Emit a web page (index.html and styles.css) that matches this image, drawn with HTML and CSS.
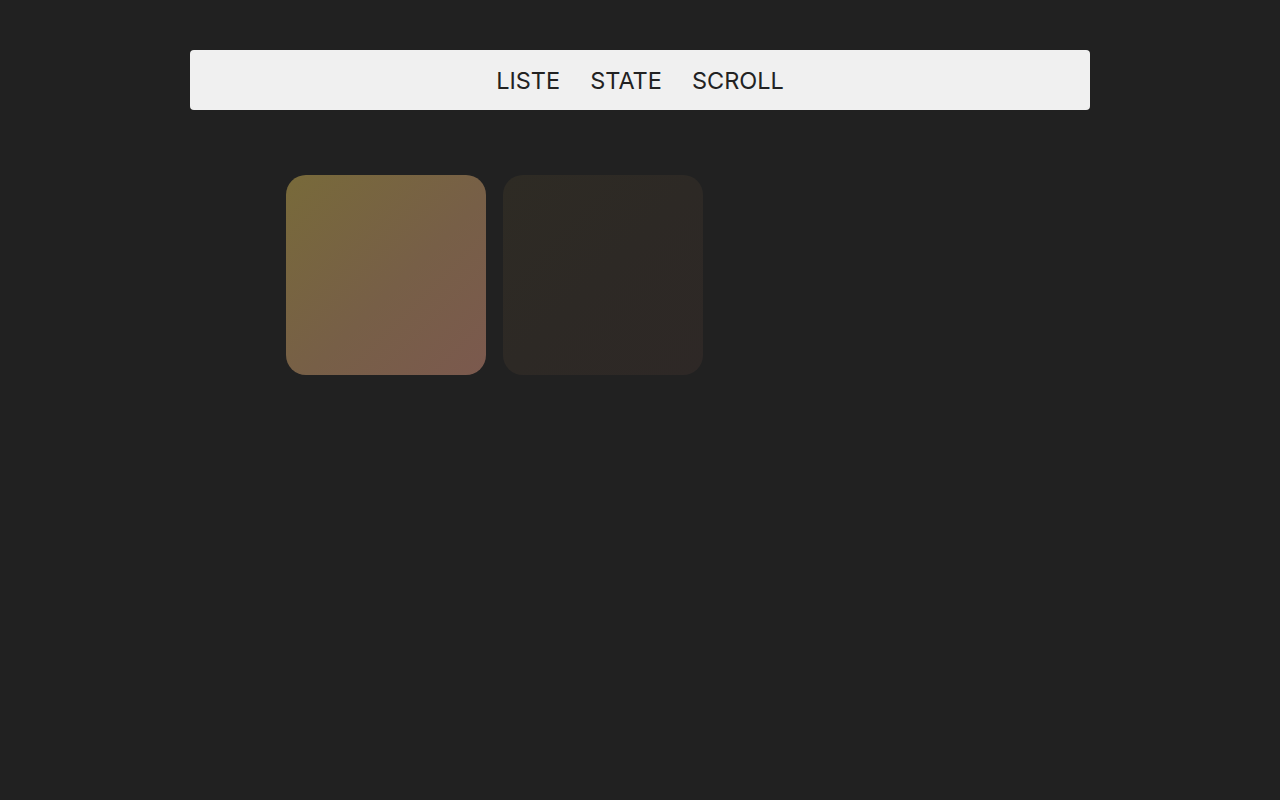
FILE: index.html
```html
<!DOCTYPE html>
<html lang="de">
<head>
<meta charset="utf-8">
<title>Liste</title>
<link rel="stylesheet" href="styles.css">
</head>
<body>
<div class="page">
  <nav class="nav">
    <a class="nav-link" href="#">LISTE</a>
    <a class="nav-link" href="#">STATE</a>
    <a class="nav-link" href="#">SCROLL</a>
  </nav>
  <div class="cards">
    <div class="card card-active"></div>
    <div class="card card-dim"></div>
  </div>
</div>
</body>
</html>
```
FILE: styles.css
```css
html, body {
  margin: 0;
  padding: 0;
  background: #212121;
  font-family: Inter, "Noto Sans", sans-serif;
}
.page {
  width: 900px;
  margin: 0 auto;
  padding-top: 50px;
}
.nav {
  height: 60px;
  background: #f0f0f0;
  border-radius: 4px;
  display: flex;
  justify-content: center;
  align-items: center;
  gap: 30px;
}
.nav-link {
  color: #222222;
  text-decoration: none;
  font-size: 23.5px;
  line-height: 1;
  padding-top: 2px;
}
.cards {
  display: flex;
  gap: 17px;
  padding-top: 65px;
  padding-left: 96px;
}
.card {
  width: 200px;
  height: 200px;
  border-radius: 20px;
}
.card-active {
  background: linear-gradient(135deg, #786a3a 0%, #775f47 55%, #7b594e 100%);
}
.card-dim {
  background: linear-gradient(135deg, #2e2b24 0%, #2d2925 50%, #2e2826 100%);
}
```
